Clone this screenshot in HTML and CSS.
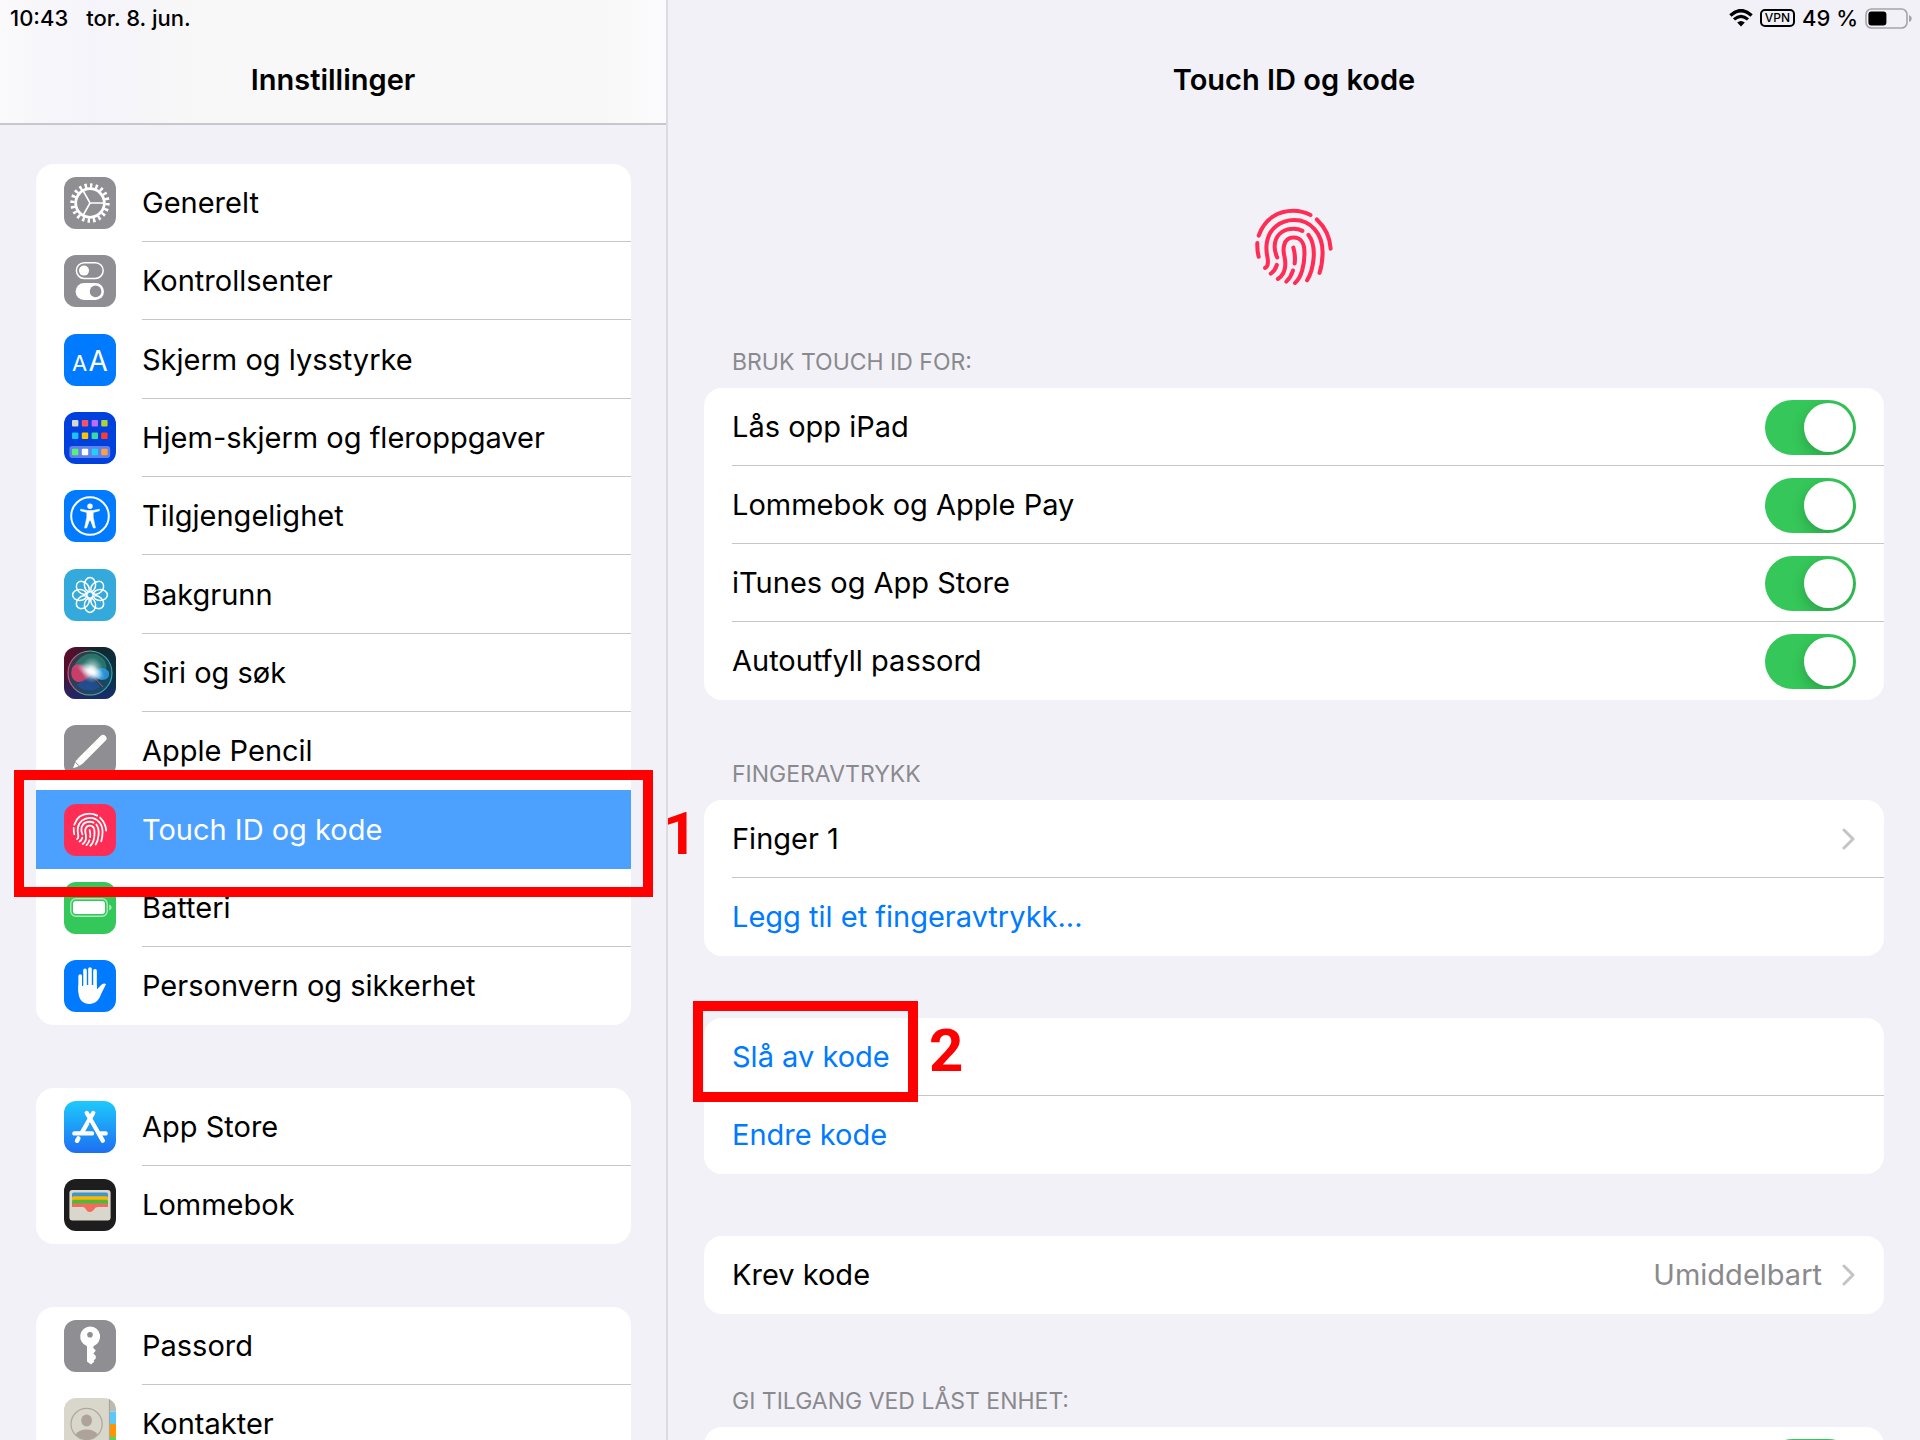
FILE: index.html
```
<!DOCTYPE html>
<html lang="nb">
<head>
	<meta charset="UTF-8">
	<meta name="viewport" content="width=device-width, initial-scale=1">
	<title>Innstillinger</title>
	<link rel="stylesheet" href="styles.css">
</head>
<body>
	<svg class="defs" aria-hidden="true">
		<symbol id="fingerprint" viewBox="75 55 232 230">
			<g fill="none" stroke="currentColor" stroke-width="12" stroke-linecap="round">
				<path d="M86 136C104 84 146 62 189 62Q216 62 240 75"/>
				<path d="M259 88Q297 124 300 175"/>
				<path d="M82 158Q81 180 86 199"/>
				<path d="M105 232Q117 226 112 200C108 182 108 172 110 158C116 116 150 90 192 90C240 90 276 130 276 185Q276 220 267 247"/>
				<path d="M141 201Q130 178 135 155C142 128 165 116 190 116Q204 116 216 122"/>
				<path d="M234 134C262 170 248 240 230 269"/>
				<path d="M143 265C166 250 168 225 163 200C158 180 160 170 162 164C166 148 178 142 190 142C212 142 222 160 222 185C223 225 212 262 194 277"/>
				<path d="M189 172Q196 195 193 219"/>
				<path d="M122 249Q135 240 140 223"/>
				<path d="M168 273Q182 260 188 240"/>
			</g>
		</symbol>
		<symbol id="chevron" viewBox="0 0 14 22">
			<path d="M2 2L11 11L2 20" fill="none" stroke="currentColor" stroke-width="3" stroke-linecap="round" stroke-linejoin="round"/>
		</symbol>
	</svg>
	<div class="app">
		<aside class="sidebar">
			<header class="top">
				<div class="status">
					<span>10:43</span>
					<span>tor. 8. jun.</span>
				</div>
				<h1>Innstillinger</h1>
			</header>
			<nav>
				<ul class="list">
					<li><a href="#generelt">
						<svg class="icon gray" viewBox="0 0 52 52">
							<circle cx="26" cy="26" r="17.5" fill="none" stroke="#fff" stroke-width="4.4" pathLength="40" stroke-dasharray="0.9 1.1"/>
							<circle cx="26" cy="26" r="14.3" fill="none" stroke="#fff" stroke-width="2.8"/>
							<path d="M26 26H40M26 26L19 13.5M26 26L19 38.5" stroke="#fff" stroke-width="1.6"/>
						</svg>
						<span>Generelt</span></a></li>
					<li><a href="#kontrollsenter">
						<svg class="icon gray" viewBox="0 0 52 52">
							<rect x="12.4" y="7.8" width="26.8" height="15.6" rx="7.8" fill="none" stroke="#fff" stroke-width="1.5"/>
							<circle cx="20" cy="15.6" r="5" fill="#fff"/>
							<rect x="11.6" y="28" width="28.4" height="17" rx="8.5" fill="#fff"/>
							<circle cx="31.6" cy="36.4" r="5.8" fill="#8e8e93"/>
						</svg>
						<span>Kontrollsenter</span></a></li>
					<li><a href="#skjerm">
						<svg class="icon blue" viewBox="0 0 52 52" fill="#fff">
							<text x="8" y="37" font-size="22">A</text>
							<text x="24.5" y="37" font-size="28">A</text>
						</svg>
						<span>Skjerm og lysstyrke</span></a></li>
					<li><a href="#hjem">
						<svg class="icon navy" viewBox="0 0 52 52">
							<rect x="5.4" y="34" width="40.8" height="12" rx="3" fill="#5f82ea"/>
							<rect x="8" y="8" width="6.4" height="6.4" rx="1" fill="#d9d6cf"/>
							<rect x="17.8" y="8" width="6.4" height="6.4" rx="1" fill="#ff5260"/>
							<rect x="27.6" y="8" width="6.4" height="6.4" rx="1" fill="#be6cff"/>
							<rect x="37.2" y="8" width="6.4" height="6.4" rx="1" fill="#aed233"/>
							<rect x="8" y="20.6" width="6.4" height="6.4" rx="1" fill="#1cc0fb"/>
							<rect x="17.8" y="20.6" width="6.4" height="6.4" rx="1" fill="#ffc400"/>
							<rect x="27.6" y="20.6" width="6.4" height="6.4" rx="1" fill="#38d9a5"/>
							<rect x="37.2" y="20.6" width="6.4" height="6.4" rx="1" fill="#ff3b30"/>
							<rect x="8" y="36.8" width="6.4" height="6.4" rx="1" fill="#5af078"/>
							<rect x="17.8" y="36.8" width="6.4" height="6.4" rx="1" fill="#fff"/>
							<rect x="27.6" y="36.8" width="6.4" height="6.4" rx="1" fill="#1cd2fb"/>
							<rect x="37.2" y="36.8" width="6.4" height="6.4" rx="1" fill="#ff9f45"/>
						</svg>
						<span>Hjem-skjerm og fleroppgaver</span></a></li>
					<li><a href="#tilgjengelighet">
						<svg class="icon blue" viewBox="0 0 52 52">
							<circle cx="26" cy="26" r="18.8" fill="none" stroke="#fff" stroke-width="2"/>
							<circle cx="26" cy="16.2" r="2.7" fill="#fff"/>
							<path d="M16.6 19.2L23.4 20.6H28.6L35.4 19.2V20.8L29.2 22.4V27.4L31.4 38H29.4L26.6 30.4H25.4L22.6 38H20.6L22.8 27.4V22.4L16.6 20.8Z" fill="#fff" stroke="#fff" stroke-width=".6" stroke-linejoin="round"/>
						</svg>
						<span>Tilgjengelighet</span></a></li>
					<li><a href="#bakgrunn">
						<svg class="icon cyan" viewBox="0 0 52 52">
							<g fill="none" stroke="#fff" stroke-width="1.5">
								<ellipse cx="26" cy="15.8" rx="5.6" ry="7.2"/>
								<ellipse cx="26" cy="15.8" rx="5.6" ry="7.2" transform="rotate(45 26 26)"/>
								<ellipse cx="26" cy="15.8" rx="5.6" ry="7.2" transform="rotate(90 26 26)"/>
								<ellipse cx="26" cy="15.8" rx="5.6" ry="7.2" transform="rotate(135 26 26)"/>
								<ellipse cx="26" cy="15.8" rx="5.6" ry="7.2" transform="rotate(180 26 26)"/>
								<ellipse cx="26" cy="15.8" rx="5.6" ry="7.2" transform="rotate(225 26 26)"/>
								<ellipse cx="26" cy="15.8" rx="5.6" ry="7.2" transform="rotate(270 26 26)"/>
								<ellipse cx="26" cy="15.8" rx="5.6" ry="7.2" transform="rotate(315 26 26)"/>
							</g>
						</svg>
						<span>Bakgrunn</span></a></li>
					<li><a href="#siri">
						<svg class="icon" viewBox="0 0 52 52">
							<defs>
								<linearGradient id="siri-bg" x1="0" y1="0.3" x2="1" y2="0.6">
									<stop offset="0" stop-color="#5c0c2c"/>
									<stop offset=".5" stop-color="#15232e"/>
									<stop offset="1" stop-color="#07333f"/>
								</linearGradient>
								<linearGradient id="siri-low" x1="0" y1="0" x2="0" y2="1">
									<stop offset=".5" stop-color="#18307a" stop-opacity="0"/>
									<stop offset="1" stop-color="#202a7c" stop-opacity=".8"/>
								</linearGradient>
								<linearGradient id="siri-ring" x1="0" y1="0" x2="1" y2="0">
									<stop offset="0" stop-color="#d04b78"/>
									<stop offset=".5" stop-color="#52b78c"/>
									<stop offset="1" stop-color="#2ba0b8"/>
								</linearGradient>
								<radialGradient id="siri-glow">
									<stop offset="0" stop-color="#fff"/>
									<stop offset=".25" stop-color="#fff" stop-opacity=".85"/>
									<stop offset="1" stop-color="#bfe6f2" stop-opacity="0"/>
								</radialGradient>
							</defs>
							<rect width="52" height="52" fill="url(#siri-bg)"/>
							<rect width="52" height="52" fill="url(#siri-low)"/>
							<circle cx="26" cy="26" r="22" fill="#2b6f7b" fill-opacity=".4" stroke="url(#siri-ring)" stroke-width="1.2"/>
							<path d="M9 20Q18 4 32 7Q46 13 41 27L27 27Z" fill="#31957e" opacity=".6"/>
							<path d="M28 27Q14 11 8 21Q5 31 13 35Q22 36 28 27Z" fill="#e2406f" opacity=".85"/>
							<path d="M28 27Q38 16 45 25Q46 33 38 33Q32 32 28 27Z" fill="#2a9bea" opacity=".85"/>
							<path d="M27 28L12 38Q24 48 36 40Z" fill="#2455a8" opacity=".6"/>
							<path d="M27 27L39 40" stroke="#d86d8d" stroke-width="1" opacity=".7"/>
							<ellipse cx="27" cy="24.6" rx="15" ry="7" fill="url(#siri-glow)" transform="rotate(24 27 25)"/>
							<ellipse cx="28" cy="23" rx="11" ry="13" fill="url(#siri-glow)" opacity=".8"/>
						</svg>
						<span>Siri og søk</span></a></li>
					<li class="plain"><a href="#pencil">
						<svg class="icon gray" viewBox="0 0 52 52">
							<path d="M39 13.4L16.6 35.8" stroke="#fff" stroke-width="7" stroke-linecap="round"/>
							<path d="M12.4 34.8L17.4 39.8L12.8 42L9 43.2L10.4 39.4Z" fill="#fff"/>
							<path d="M11.4 37.2L15 40.8" stroke="#8e8e93" stroke-width="1"/>
						</svg>
						<span>Apple Pencil</span></a></li>
					<li class="plain selected"><a href="#touchid" aria-current="page">
						<svg class="icon pink" viewBox="0 0 52 52">
							<use href="#fingerprint" x="8.6" y="8.6" width="34.6" height="34.4"/>
						</svg>
						<span>Touch ID og kode</span></a>
						<span class="mark"></span>
						<strong class="step">1</strong></li>
					<li><a href="#batteri">
						<svg class="icon green" viewBox="0 0 52 52">
							<rect x="6.8" y="16.8" width="36.4" height="17.4" rx="5" fill="none" stroke="#fff" stroke-width="1.4" opacity=".6"/>
							<rect x="9" y="19" width="32" height="13" rx="3" fill="#fff"/>
							<path d="M45.2 22.6Q47.6 23.4 47.6 25.5T45.2 28.4Z" fill="#fff" opacity=".6"/>
						</svg>
						<span>Batteri</span></a></li>
					<li><a href="#personvern">
						<svg class="icon blue" viewBox="0 0 52 52">
							<g fill="none" stroke="#fff" stroke-width="3.7" stroke-linecap="round">
								<path d="M16.2 16V31M21 10.4V28M26 9V28M31 10.8V29"/>
							</g>
							<path d="M14.4 25H32.8V29.6L37.4 24.8Q40.4 22.6 42 24.2L37.6 33Q34 44 26 44Q15 44 14.4 32Z" fill="#fff"/>
							<path d="M18.6 13V26M23.5 10V25M28.5 10V25" stroke="#007aff" stroke-width="1.1"/>
						</svg>
						<span>Personvern og sikkerhet</span></a></li>
				</ul>
				<ul class="list">
					<li><a href="#appstore">
						<svg class="icon appstore" viewBox="0 0 52 52">
							<g fill="none" stroke="#fff" stroke-width="4.4" stroke-linecap="round">
								<path d="M29.2 12L18 31.4M10.4 32.4H28M37 32.4H41.6M14.4 37.4L13 39.8M22.8 12L38.8 39.6"/>
							</g>
							<path d="M28 20L36 34.6" stroke="#1d8ff6" stroke-width="1" transform="translate(-2.6 1.6)"/>
						</svg>
						<span>App Store</span></a></li>
					<li><a href="#lommebok">
						<svg class="icon black" viewBox="0 0 52 52">
							<rect x="5.4" y="11" width="41.2" height="30.4" rx="3" fill="#d9d7cc"/>
							<rect x="8" y="13.6" width="36" height="8" rx="1.6" fill="#3e98cd"/>
							<rect x="8" y="17.2" width="36" height="8" rx="1.6" fill="#ffb400"/>
							<rect x="8" y="20.8" width="36" height="7" rx="1.6" fill="#50b83c"/>
							<path d="M8 26Q8 24.6 9.6 24.6H42.4Q44 24.6 44 26V28H34Q31.4 28 30 30.4T26 33T22 30.4T18 28H8Z" fill="#f16c5e"/>
						</svg>
						<span>Lommebok</span></a></li>
				</ul>
				<ul class="list">
					<li><a href="#passord">
						<svg class="icon gray" viewBox="0 0 52 52">
							<path d="M26 6.4A10.2 10.2 0 0 1 29.4 26.2V28L31.8 30.6L29.4 33.4L31.8 36V38.6L29.6 40.4L30.4 41.4L27 44.4L23 41.4V26.2A10.2 10.2 0 0 1 26 6.4Z" fill="#fff"/>
							<circle cx="26" cy="14.7" r="2.8" fill="#8e8e93"/>
						</svg>
						<span>Passord</span></a></li>
					<li><a href="#kontakter">
						<svg class="icon" viewBox="0 0 52 52">
							<rect width="52" height="52" fill="#d9d7cc"/>
							<rect x="45" width="7" height="13" fill="#bdbab1"/>
							<rect x="45.6" y="13.6" width="7" height="12.4" fill="#5ac8fa"/>
							<rect x="45.6" y="26" width="7" height="13" fill="#ff9500"/>
							<rect x="45.6" y="39" width="7" height="13" fill="#4cd964"/>
							<path d="M45.4 0V52" stroke="#a5a29a" stroke-width="1"/>
							<circle cx="22.6" cy="26" r="15.6" fill="none" stroke="#aca799" stroke-width="1.2"/>
							<ellipse cx="22.6" cy="22.4" rx="5.4" ry="6" fill="#ada39b"/>
							<path d="M11.6 36.4Q15 31.4 22.6 31.4T33.6 36.4Q29 41.2 22.6 41.2T11.6 36.4Z" fill="#ada39b"/>
						</svg>
						<span>Kontakter</span></a></li>
				</ul>
			</nav>
		</aside>

		<main>
			<header class="top">
				<div class="status right">
					<svg class="wifi" viewBox="0 0 24 18" aria-hidden="true">
						<path d="M1.4 6.4Q12-3.2 22.6 6.4" fill="none" stroke="#000" stroke-width="3.4"/>
						<path d="M5 10.4Q12 4.2 19 10.4" fill="none" stroke="#000" stroke-width="3.2"/>
						<path d="M8.2 13.6Q12 10.4 15.8 13.6L12 17.6Z"/>
					</svg>
					<span class="vpn">VPN</span>
					<span>49 %</span>
					<svg class="battery" viewBox="0 0 47 21" aria-hidden="true">
						<rect x="1" y="1" width="41" height="19" rx="5.5" fill="none" stroke="#a5a4a8" stroke-width="1.6"/>
						<rect x="3.4" y="3.4" width="18" height="14.2" rx="3"/>
						<path d="M44 7Q46.8 8 46.8 10.5T44 14Z" fill="#a5a4a8"/>
					</svg>
				</div>
				<h2>Touch ID og kode</h2>
			</header>
			<svg class="hero" aria-hidden="true"><use href="#fingerprint"/></svg>

			<section>
				<h3>Bruk Touch ID for:</h3>
				<ul class="list">
					<li><label for="las">Lås opp iPad</label><input type="checkbox" role="switch" id="las" checked></li>
					<li><label for="pay">Lommebok og Apple Pay</label><input type="checkbox" role="switch" id="pay" checked></li>
					<li><label for="itunes">iTunes og App Store</label><input type="checkbox" role="switch" id="itunes" checked></li>
					<li><label for="auto">Autoutfyll passord</label><input type="checkbox" role="switch" id="auto" checked></li>
				</ul>
			</section>
			<section>
				<h3>Fingeravtrykk</h3>
				<ul class="list">
					<li><a href="#finger1"><span>Finger 1</span><svg class="chevron"><use href="#chevron"/></svg></a></li>
					<li><button type="button">Legg til et fingeravtrykk...</button></li>
				</ul>
			</section>
			<section>
				<ul class="list">
					<li><button type="button">Slå av kode</button><span class="mark"></span><strong class="step">2</strong></li>
					<li><button type="button">Endre kode</button></li>
				</ul>
			</section>
			<section>
				<ul class="list">
					<li><a href="#krev"><span>Krev kode</span><span class="value">Umiddelbart</span><svg class="chevron"><use href="#chevron"/></svg></a></li>
				</ul>
			</section>
			<section class="locked">
				<h3 id="locked">Gi tilgang ved låst enhet:</h3>
				<ul class="list">
					<li><input type="checkbox" role="switch" aria-labelledby="locked" checked></li>
				</ul>
			</section>
		</main>
	</div>
</body>
</html>
```
FILE: styles.css
```
*{box-sizing: border-box;}
body,ul,h1,h2,h3{margin: 0;padding: 0;}
body{background-color: #f2f1f7;color: #000;font-family: Inter,"Liberation Sans",sans-serif;font-size: 29px;line-height: 36px;}
ul{list-style-type: none;}
a{color: inherit;text-decoration: none;}
svg{display: block;flex: none;}
.defs{position: absolute;width: 0;height: 0;}

.app{display: grid;grid-template-columns: 668px 1fr;height: 100vh;overflow: hidden;}
.sidebar{border-right: 2px solid #dcdbe0;}

/* top bars */
.top{height: 125px;}
.sidebar .top{border-bottom: 2px solid #c8c7cc;background: linear-gradient(90deg,#fafafc,#f4f4fa 14%,#f8f8f8 30%,#f8f8f8 90%,#fbfbfd);}
.status{display: flex;align-items: center;gap: 18px;height: 36px;padding: 0 10px;font-size: 22px;font-weight: 500;line-height: 24px;}
.status.right{justify-content: flex-end;gap: 7px;padding-right: 8px;}
.wifi{width: 24px;height: 18px;}
.vpn{padding: 0 3px;border: 2px solid #000;border-radius: 5px;font-size: 12px;line-height: 14px;}
.battery{width: 47px;height: 21px;}
h1,h2{font-size: 29px;font-weight: 600;line-height: 36px;text-align: center;padding-top: 26px;}

/* grouped lists */
.list{background-color: #fff;border-radius: 18px;}
.list li{position: relative;display: flex;align-items: center;height: 78px;}
.list li::after{content: "";position: absolute;left: 28px;right: 0;bottom: 0;height: 1px;background-color: #c6c6c8;}
.list li:last-child::after,.list .plain::after{display: none;}
.list a{flex: 1;display: flex;align-items: center;}

nav{display: flex;flex-direction: column;gap: 63px;padding: 39px 35px 0 36px;}
nav .list li:nth-child(3n){height: 79px;}
nav .list li::after{left: 106px;}
nav .list a{gap: 26px;height: 100%;padding-left: 28px;}
.selected a{background-color: #4ca1ff;color: #fff;}

.icon{width: 52px;height: 52px;border-radius: 12px;}
.gray{background-color: #8e8e93;}
.blue{background-color: #007aff;}
.navy{background-color: #0040dd;}
.cyan{background-color: #34aadc;}
.pink{background-color: #ff2d55;}
.green{background-color: #34c759;}
.black{background-color: #1d1d1d;}
.appstore{background: linear-gradient(#1ec9fc,#1d6ff2);}

/* detail pane */
.hero{width: 78px;height: 78px;margin: 83px auto 62px;color: #ff2d55;}
section{padding: 0 36px;}
section + section{margin-top: 62px;}
h3{padding: 0 28px 12px;color: #8a8a8e;font-size: 23px;font-weight: 400;line-height: 28px;text-transform: uppercase;}
section:nth-of-type(2){margin-top: 60px;}
section.locked{margin-top: 73px;}
main .list li{padding: 0 28px;}
label{flex: 1;}
.value{margin-left: auto;margin-right: 20px;color: #8a8a8e;}
.chevron{width: 14px;height: 22px;color: #c4c4c7;}
span + .chevron{margin-left: auto;}
.value + .chevron{margin-left: 0;}
button{border: 0;padding: 0;background: none;color: #007aff;font: inherit;cursor: pointer;}

input[type=checkbox]{appearance: none;position: relative;width: 91px;height: 55px;margin: 0 0 0 auto;border-radius: 28px;background-color: #e9e9ea;overflow: hidden;cursor: pointer;}
input[type=checkbox]::before{content: "";position: absolute;top: 3px;left: 3px;width: 49px;height: 49px;border-radius: 50%;background-color: #fff;box-shadow: 0 5px 14px rgba(0,0,0,.2);}
input[type=checkbox]:checked{background-color: #35c759;}
input[type=checkbox]:checked::before{left: 39px;}

/* numbered steps drawn over the rows */
.mark{position: absolute;z-index: 1;border: 10px solid #f00;pointer-events: none;}
.step{position: absolute;z-index: 1;color: #f00;font: bold 60px/60px Roboto,"Liberation Sans",sans-serif;}
.selected .mark{top: -20px;right: -22px;bottom: -28px;left: -22px;}
.selected .step{top: 14px;left: 627px;}
main .mark{top: -17px;left: -11px;width: 225px;height: 101px;}
main .step{top: 3px;left: 225px;}
```
